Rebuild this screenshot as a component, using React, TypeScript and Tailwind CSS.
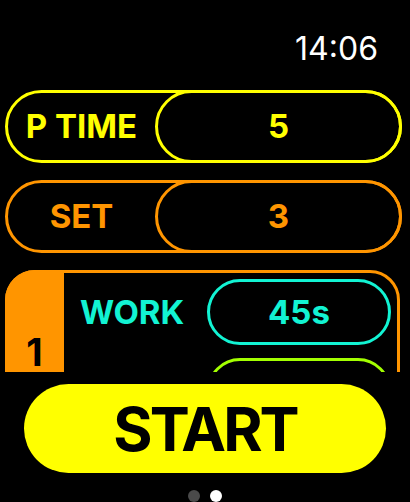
const PillRow = ({
  label,
  value,
  color,
}: {
  label: string;
  value: string;
  color: "yellow" | "orange";
}) => {
  const border = color === "yellow" ? "border-[#FFFF00]" : "border-[#FF9500]";
  const text = color === "yellow" ? "text-[#FFFF00]" : "text-[#FF9500]";
  return (
    <div className={`flex h-[73px] w-[397px] shrink-0 items-center rounded-full border-[3px] ${border}`}>
      <div className={`flex flex-1 items-center justify-center font-bold text-[33px] leading-none ${text}`}>
        {label}
      </div>
      <div
        className={`-my-[3px] -mr-[3px] flex h-[73px] w-[247px] items-center justify-center rounded-full border-[3px] ${border} font-bold text-[33px] leading-none ${text}`}
      >
        {value}
      </div>
    </div>
  );
};

const IntervalRow = ({
  label,
  value,
  color,
}: {
  label: string;
  value: string;
  color: "cyan" | "lime";
}) => {
  const border = color === "cyan" ? "border-[#12F3D3]" : "border-[#A3FF00]";
  const text = color === "cyan" ? "text-[#12F3D3]" : "text-[#A3FF00]";
  return (
    <div className="flex h-[66px] items-center">
      <div className={`flex-1 pl-[13px] font-bold text-[33px] leading-none ${text}`}>{label}</div>
      <div
        className={`flex h-[66px] w-[184px] items-center justify-center rounded-full border-[3px] ${border} font-bold text-[33px] leading-none ${text}`}
      >
        {value}
      </div>
    </div>
  );
};

export default function App() {
  return (
    <div className="flex h-[502px] w-[410px] flex-col overflow-hidden bg-black font-['Inter',sans-serif]">
      {/* Clock */}
      <div className="flex h-[90px] shrink-0 justify-end pr-[32px] pt-[33px]">
        <span className="text-[32px] font-normal leading-none text-white">14:06</span>
      </div>

      {/* Scroll area */}
      <div className="flex h-[282px] shrink-0 flex-col gap-[17px] overflow-hidden pl-[5px]">
        <PillRow label="P TIME" value="5" color="yellow" />
        <PillRow label="SET" value="3" color="orange" />

        {/* Interval card */}
        <div className="flex w-[395px] shrink-0 rounded-[30px] border-[3px] border-[#FF9500]">
          <div className="-my-[3px] -ml-[3px] flex w-[59px] shrink-0 items-center justify-center rounded-l-[30px] bg-[#FF9500]">
            <span className="font-bold text-[38px] leading-none text-black">1</span>
          </div>
          <div className="flex flex-1 flex-col gap-[13px] pb-[6px] pl-[3px] pr-[6px] pt-[6px]">
            <IntervalRow label="WORK" value="45s" color="cyan" />
            <IntervalRow label="REST" value="15s" color="lime" />
          </div>
        </div>
      </div>

      {/* Start button */}
      <div className="flex shrink-0 justify-center pt-[12px]">
        <button className="flex h-[89px] w-[362px] items-center justify-center rounded-full bg-[#FFFF00]">
          <span className="font-bold text-[60px] leading-[1.1] tracking-[-3px] text-black">START</span>
        </button>
      </div>

      {/* Page dots */}
      <div className="flex shrink-0 justify-center gap-[10px] pt-[17px]">
        <span className="h-[12px] w-[12px] rounded-full bg-[#4a4a4a]" />
        <span className="h-[12px] w-[12px] rounded-full bg-white" />
      </div>
    </div>
  );
}
